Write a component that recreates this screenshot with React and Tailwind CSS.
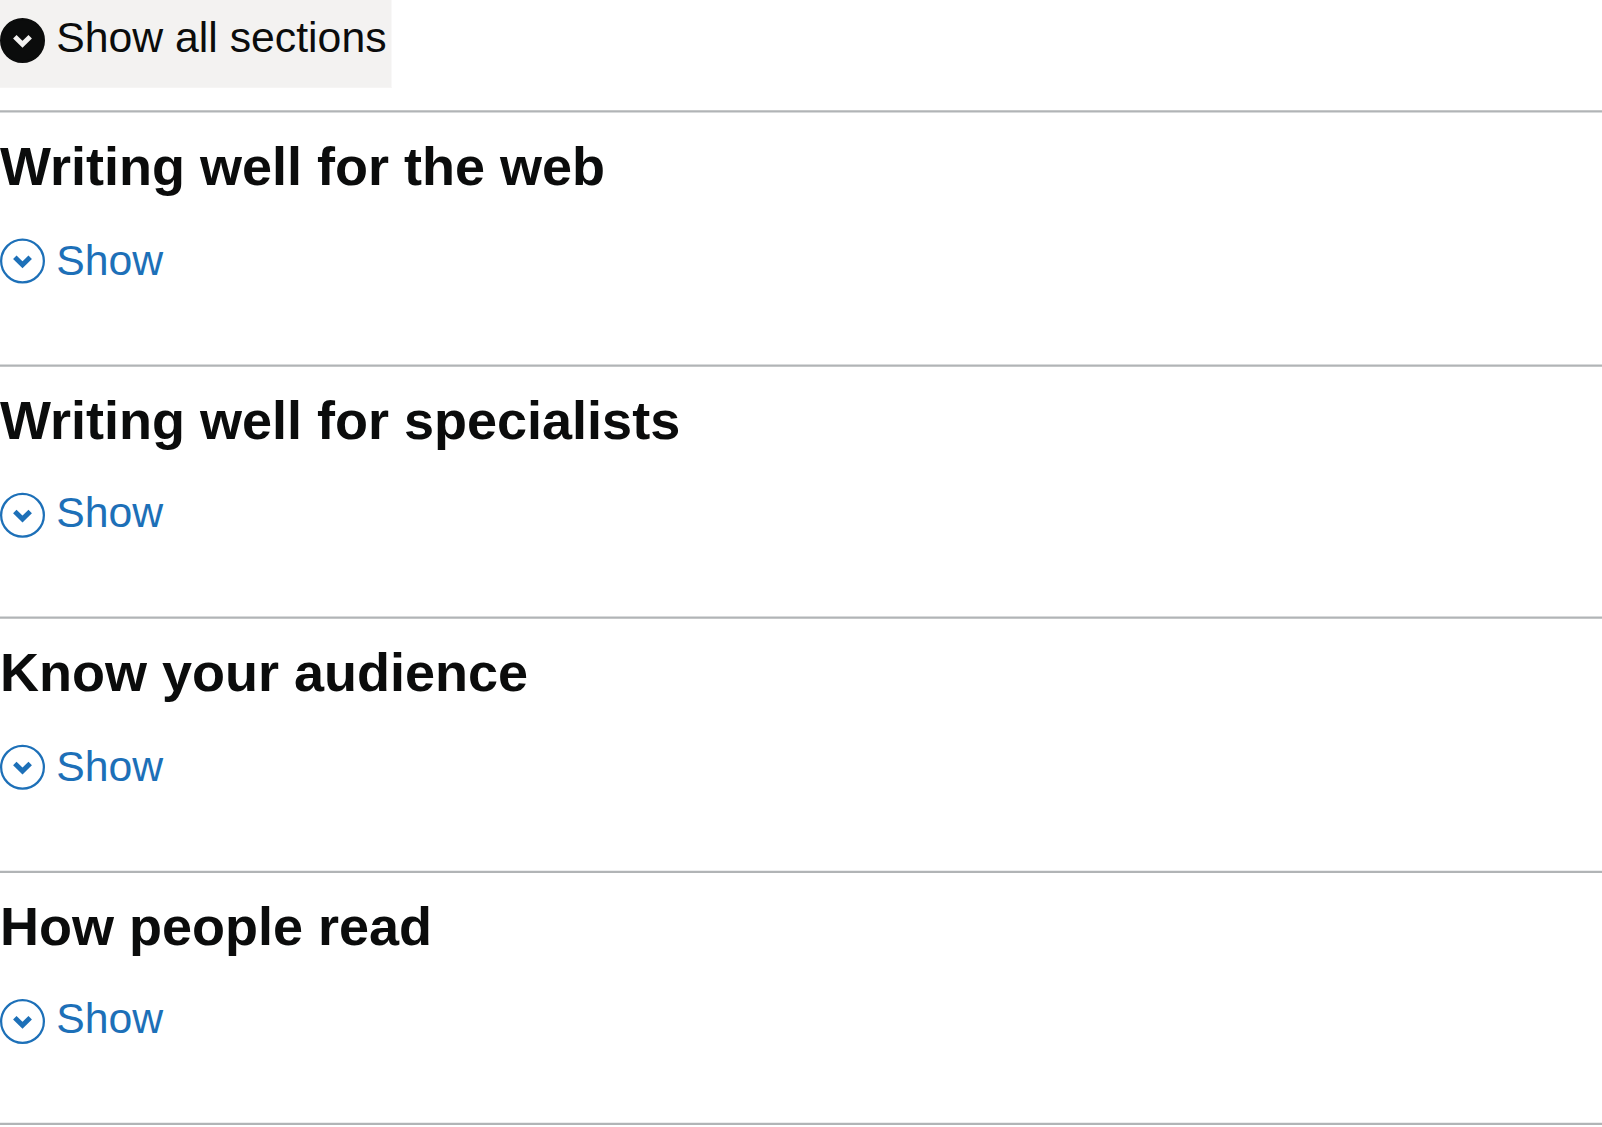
const sections = [
  { title: 'Writing well for the web', height: 'h-[254px]', line: 'border-t-[#c5c7c8] border-b-[#d8dadb]', shift: 0.5, text: 'mt-0' },
  { title: 'Writing well for specialists', height: 'h-[252px]', line: 'border-t-[#d8dadb] border-b-[#c5c7c8]', shift: 0.75, text: '-mt-[2px]' },
  { title: 'Know your audience', height: 'h-[254px]', line: 'border-t-[#d8dadb] border-b-[#c5c7c8]', shift: 0.75, text: 'mt-0' },
  { title: 'How people read', height: 'h-[252px]', line: 'border-t-[#ecedee] border-b-[#b1b4b6]', shift: 1, text: '-mt-[2px]' },
];

function Chevron({ filled = false, shift = 0 }) {
  const ring = filled ? '#0b0c0c' : '#1d70b8';
  return (
    <svg className="block shrink-0" width="45" height="46" viewBox="0 0 45 46" fill="none">
      <g transform={`translate(0 ${shift})`}>
        <circle cx="22.5" cy="22.5" r="21.375" fill={filled ? ring : 'none'} stroke={ring} strokeWidth="2.25" />
        <path d="M14.8 18.7l7.7 7.6 7.7-7.6" stroke={filled ? '#f3f2f1' : ring} strokeWidth="4.9" />
      </g>
    </svg>
  );
}

function Divider({ line }) {
  return <div className={`h-[3px] border-y bg-[#b1b4b6] ${line}`} />;
}

export default function App() {
  return (
    <main className="h-[1127px] overflow-hidden bg-white font-['Liberation_Sans',Arial,sans-serif] text-[#0b0c0c]">
      <button className="mb-[22px] flex h-[88px] w-[392px] items-start border-r border-b border-r-[#f9f8f8] border-b-[#f6f5f4] bg-[#f3f2f1] pt-[18px]">
        <Chevron filled />
        <span className="-mt-[3px] ml-[11.25px] whitespace-nowrap text-[42.75px] leading-[45px]">Show all sections</span>
      </button>
      {sections.map((s) => (
        <section key={s.title} className={s.height}>
          <Divider line={s.line} />
          <h2 className="pt-[23px] text-[54px] font-bold leading-[60px]">{s.title}</h2>
          <button className="mt-[42px] flex items-start text-[#1d70b8]">
            <Chevron shift={s.shift} />
            <span className={`ml-[11.25px] text-[42.75px] leading-[45px] ${s.text}`}>Show</span>
          </button>
        </section>
      ))}
      <Divider line="border-t-[#ecedee] border-b-[#b1b4b6]" />
    </main>
  );
}
